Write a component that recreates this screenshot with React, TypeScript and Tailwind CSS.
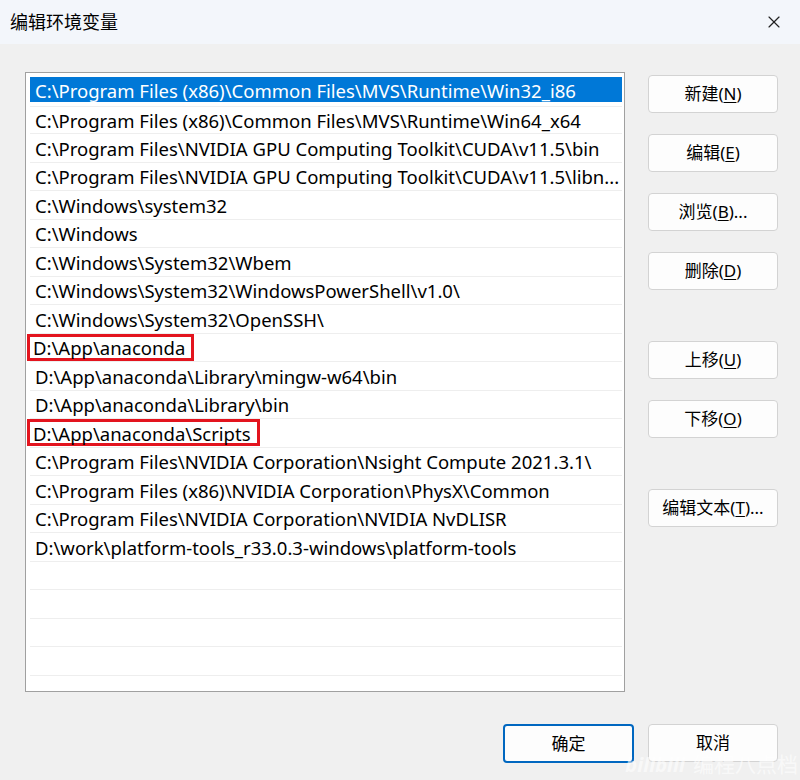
import { X } from "lucide-react";

const paths: string[] = [
  "C:\\Program Files (x86)\\Common Files\\MVS\\Runtime\\Win32_i86",
  "C:\\Program Files (x86)\\Common Files\\MVS\\Runtime\\Win64_x64",
  "C:\\Program Files\\NVIDIA GPU Computing Toolkit\\CUDA\\v11.5\\bin",
  "C:\\Program Files\\NVIDIA GPU Computing Toolkit\\CUDA\\v11.5\\libn...",
  "C:\\Windows\\system32",
  "C:\\Windows",
  "C:\\Windows\\System32\\Wbem",
  "C:\\Windows\\System32\\WindowsPowerShell\\v1.0\\",
  "C:\\Windows\\System32\\OpenSSH\\",
  "D:\\App\\anaconda",
  "D:\\App\\anaconda\\Library\\mingw-w64\\bin",
  "D:\\App\\anaconda\\Library\\bin",
  "D:\\App\\anaconda\\Scripts",
  "C:\\Program Files\\NVIDIA Corporation\\Nsight Compute 2021.3.1\\",
  "C:\\Program Files (x86)\\NVIDIA Corporation\\PhysX\\Common",
  "C:\\Program Files\\NVIDIA Corporation\\NVIDIA NvDLISR",
  "D:\\work\\platform-tools_r33.0.3-windows\\platform-tools",
  "",
  "",
  "",
  "",
  "",
];

const marked = [9, 12];

const font = {
  fontFamily: '"Noto Sans", "Noto Sans CJK SC", sans-serif',
};

interface BtnProps {
  label: string;
  keyChar: string;
  tail?: string;
  primary?: boolean;
  className?: string;
}

const Btn: React.FC<BtnProps> = ({ label, keyChar, tail, primary, className }) => (
  <button
    className={`w-[130px] h-[38px] rounded-[4px] bg-[#fdfdfd] text-[17px] text-black flex items-center justify-center ${
      primary ? "border-2 border-[#0067c0]" : "border border-[#d3d3d3]"
    } ${className ?? ""}`}
    style={font}
  >
    {label}
    {keyChar && (
      <>
        (<span className="underline underline-offset-2">{keyChar}</span>)
      </>
    )}
    {tail}
  </button>
);

const App: React.FC = () => {
  return (
    <div
      className="w-[800px] h-[780px] bg-[#f0f0f0] relative overflow-hidden flex flex-col"
      style={font}
    >
      {/* title bar */}
      <div className="h-[44px] bg-[#f3f6fb] flex items-center justify-between pl-[10px] pr-[16px]">
        <span className="text-[18px] text-black">编辑环境变量</span>
        <X className="w-[20px] h-[20px] text-[#222]" strokeWidth={1.4} />
      </div>

      <div className="flex pt-[28px] pl-[25px]">
        {/* list */}
        <div className="w-[600px] h-[620px] border border-[#a0a0a0] bg-white pt-[4px] pl-[4px] pr-[2px] overflow-hidden">
          {paths.map((p, i) => {
            const sel = i === 0;
            const mark = marked.includes(i);
            return (
              <div
                key={i}
                className={`h-[28.5px] ${sel ? "" : "border-b border-[#eeeeee]"} ${
                  i === 1 ? "border-t border-t-[#eeeeee]" : ""
                }`}
              >
                <div
                  className={`flex items-center ${
                    sel ? "h-[25px] bg-[#0078d7] text-white" : "h-full text-black"
                  }`}
                >
                  <span
                    className={`text-[18.5px] whitespace-nowrap leading-none h-[27px] flex items-center ${
                      sel ? "pt-[4px]" : "pt-[2px]"
                    } ${
                      mark ? "border-[3px] border-[#e3141e] -ml-[3px] pl-[3px] pr-[6px]" : "px-[5px]"
                    }`}
                  >
                    {p}
                  </span>
                </div>
              </div>
            );
          })}
        </div>

        {/* side buttons */}
        <div className="flex flex-col ml-[23px] pt-[3px]">
          <Btn label="新建" keyChar="N" />
          <Btn label="编辑" keyChar="E" className="mt-[21px]" />
          <Btn label="浏览" keyChar="B" tail="..." className="mt-[21px]" />
          <Btn label="删除" keyChar="D" className="mt-[21px]" />
          <Btn label="上移" keyChar="U" className="mt-[51px]" />
          <Btn label="下移" keyChar="O" className="mt-[21px]" />
          <Btn label="编辑文本" keyChar="T" tail="..." className="mt-[51px]" />
        </div>
      </div>

      {/* bottom buttons */}
      <div className="flex justify-end gap-[14px] pr-[22px] mt-[32px]">
        <Btn label="确定" keyChar="" primary className="w-[131px] h-[39px]" />
        <Btn label="取消" keyChar="" />
      </div>

      {/* watermark */}
      <div className="absolute right-[2px] bottom-[3px] flex items-end gap-[6px] text-white/60 select-none pointer-events-none">
        <span className="text-[20px] font-bold italic leading-tight pr-[2px]">bilibili</span>
        <span className="text-[21px] leading-tight">编程八点档</span>
      </div>
    </div>
  );
};

export default App;
